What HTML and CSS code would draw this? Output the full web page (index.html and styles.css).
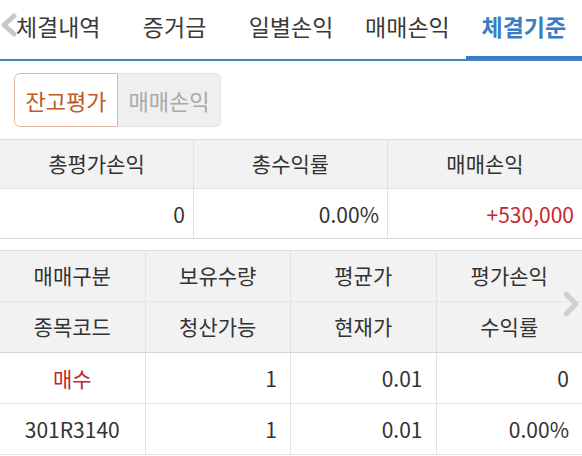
FILE: index.html
```html
<!DOCTYPE html>
<html lang="ko">
<head>
<meta charset="utf-8">
<link rel="stylesheet" href="styles.css">
</head>
<body>
<div class="page">
  <nav class="tabs">
    <div class="tab">체결내역</div>
    <div class="tab">증거금</div>
    <div class="tab">일별손익</div>
    <div class="tab">매매손익</div>
    <div class="tab active">체결기준</div>
    <svg class="chev chev-left" width="20" height="24" viewBox="0 0 20 24"><polyline points="15,3 5,12 15,21" fill="none" stroke="#c8c8c8" stroke-width="5" stroke-linejoin="round" stroke-linecap="round"/></svg>
  </nav>

  <div class="seg-wrap">
    <div class="seg">
      <div class="seg-btn on">잔고평가</div>
      <div class="seg-btn off">매매손익</div>
    </div>
  </div>

  <div class="summary">
    <div class="cell head">총평가손익</div>
    <div class="cell head">총수익률</div>
    <div class="cell head">매매손익</div>
    <div class="cell num">0</div>
    <div class="cell num">0.00%</div>
    <div class="cell num red">+530,000</div>
  </div>

  <div class="detail">
    <div class="cell head r1">매매구분</div>
    <div class="cell head r1">보유수량</div>
    <div class="cell head r1">평균가</div>
    <div class="cell head r1">평가손익</div>
    <div class="cell head r2">종목코드</div>
    <div class="cell head r2">청산가능</div>
    <div class="cell head r2">현재가</div>
    <div class="cell head r2">수익률</div>
    <div class="cell center red d1">매수</div>
    <div class="cell num d1">1</div>
    <div class="cell num d1">0.01</div>
    <div class="cell num d1">0</div>
    <div class="cell center d2">301R3140</div>
    <div class="cell num d2">1</div>
    <div class="cell num d2">0.01</div>
    <div class="cell num d2">0.00%</div>
    <svg class="chev chev-right" width="20" height="28" viewBox="0 0 20 28"><polyline points="5,4 15,14 5,24" fill="none" stroke="#cfcfcf" stroke-width="5" stroke-linejoin="round" stroke-linecap="round"/></svg>
  </div>
</div>
</body>
</html>
```

FILE: styles.css
```css
* { box-sizing: border-box; }
html, body { margin: 0; padding: 0; background: #fff; }
body {
  font-family: "Noto Sans CJK KR", "Noto Sans", sans-serif;
  color: #333;
  width: 582px;
  overflow: hidden;
}
.page { width: 582px; }

.tabs {
  position: relative;
  display: grid;
  grid-template-columns: repeat(5, 1fr);
  height: 61px;
  border-bottom: 2px solid #4682c4;
}
.tab {
  display: flex;
  align-items: center;
  justify-content: center;
  font-size: 23px;
  color: #3a3a3a;
  padding-bottom: 7px;
  height: 59px;
  white-space: nowrap;
}
.tab.active {
  color: #3b7dc4;
  font-weight: 700;
  border-bottom: 3px solid #3b7dc4;
  padding-bottom: 4px;
}
.chev { position: absolute; }
.chev-left { left: -1px; top: 13px; }

.seg-wrap {
  padding: 12px 14px 12px;
  border-bottom: 1px solid #dedede;
}
.seg {
  display: flex;
  width: 207px;
  height: 54px;
}
.seg-btn {
  flex: 1;
  display: flex;
  align-items: center;
  justify-content: center;
  font-size: 22px;
  padding-bottom: 1px;
}
.seg-btn.on {
  color: #c0582a;
  background: #fff;
  border: 1px solid #e2b79d;
  border-radius: 6px 0 0 6px;
}
.seg-btn.off {
  color: #a9a9a9;
  background: #efefef;
  border: 1px solid #e0e0e0;
  border-left: none;
  border-radius: 0 6px 6px 0;
}

.summary {
  display: grid;
  grid-template-columns: 1fr 1fr 1fr;
  border-bottom: 1px solid #d8d8d8;
  margin-bottom: 11px;
}
.cell {
  display: flex;
  align-items: center;
  font-size: 21px;
  color: #333;
  border-right: 1px solid #e2e2e2;
  white-space: nowrap;
}
.cell:nth-child(3n) { border-right: none; }
.summary .cell { height: 49px; }
.summary .cell.num { padding-right: 8px; }
.head {
  background: #f2f2f2;
  justify-content: center;
  padding-bottom: 2px;
}
.summary .head { border-bottom: 1px solid #e2e2e2; }
.num { justify-content: flex-end; padding-right: 13px; }
.center { justify-content: center; }
.red { color: #c3282c; }

.detail {
  position: relative;
  display: grid;
  grid-template-columns: repeat(4, 1fr);
  border-top: 1px solid #dcdcdc;
}
.detail .cell { border-right: 1px solid #e2e2e2; height: 51px; }
.detail .cell:nth-child(3n) { border-right: 1px solid #e2e2e2; }
.detail .cell:nth-child(4n) { border-right: none; }
.detail .r1 { border-bottom: 1px solid #e6e6e6; }
.detail .r2 { border-bottom: 1px solid #d6d6d6; }
.detail .d1 { border-bottom: 1px solid #e6e6e6; }
.detail .d2 { border-bottom: 1px solid #e2e2e2; }
.chev-right { right: 1px; top: 39px; }
```
